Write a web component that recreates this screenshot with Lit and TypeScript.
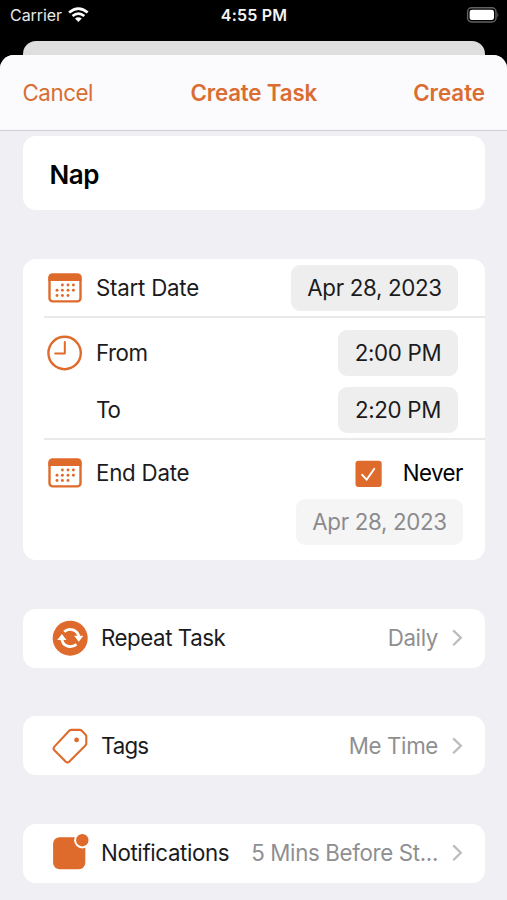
import { LitElement, html, css, svg } from "lit";
import { customElement, property } from "lit/decorators.js";

const calendarDots = [
  [14.4, 12], [20, 12], [25.4, 12],
  [9, 17.3], [14.4, 17.3], [20, 17.3], [25.4, 17.3],
  [9, 22.5], [14.4, 22.5], [20, 22.5],
];

const icons: Record<string, unknown> = {
  calendar: html`<svg width="34" height="30" viewBox="0 0 34 30">
    <rect x="1.5" y="1.8" width="31" height="26.6" rx="3.2" fill="#fff" stroke="#de6a2b" stroke-width="2.4" />
    <path d="M.4 8V4.6Q.4.6 4.2.6H29.8Q33.6.6 33.6 4.6V8Z" fill="#de6a2b" />
    ${calendarDots.map(([x, y]) => svg`<circle cx=${x} cy=${y} r="1.45" fill="#de6a2b" />`)}
  </svg>`,
  clock: html`<svg width="36" height="36" viewBox="0 0 36 36" fill="none" stroke="#de6a2b">
    <circle cx="17.6" cy="18" r="16.2" stroke-width="2.4" />
    <path d="M17.8 7V18.6H8.2" stroke-width="2" stroke-linecap="round" stroke-linejoin="round" />
  </svg>`,
  repeat: html`<svg width="36" height="36" viewBox="0 0 36 36">
    <circle cx="18.2" cy="18.2" r="17.5" fill="#de6a2b" />
    <g fill="none" stroke="#fff" stroke-width="2.8">
      <path d="M12.2 11.8A8.7 8.7 0 0 1 26.8 16.6" />
      <path d="M24.4 24.2A8.7 8.7 0 0 1 9.8 19.2" />
    </g>
    <path d="M22.1 15.8H31.4L26.8 21.8ZM5.2 20H14.5L9.9 13.9Z" fill="#fff" />
  </svg>`,
  tag: html`<svg width="36" height="36" viewBox="0 0 36 36">
    <path d="M19.4 1.9H27.6Q28.9 1.9 29.8 2.8L33.4 6.5Q34.3 7.4 34.3 8.7V15.4Q34.3 16.7 33.4 17.6L17.4 33.6Q15.5 35.3 13.6 33.5L2.4 22.2Q.7 20.4 2.4 18.6L17.2 2.8Q18.1 1.9 19.4 1.9Z" fill="none" stroke="#de6a2b" stroke-width="2.1" />
    <circle cx="24.6" cy="11.9" r="2.4" fill="#de6a2b" />
  </svg>`,
  badge: html`<svg width="36" height="36" viewBox="0 0 36 36" overflow="visible">
    <rect x="1.1" y="2.2" width="32.2" height="32" rx="6.5" fill="#de6a2b" />
    <circle cx="30.3" cy="5.2" r="8.2" fill="#fff" />
    <circle cx="30.3" cy="5.2" r="6.2" fill="#de6a2b" />
  </svg>`,
};

@customElement("status-bar")
class StatusBar extends LitElement {
  static styles = css`
    :host { display: grid; grid-template-columns: 1fr auto 1fr; align-items: center; height: 30px; padding: 0 8px 0 10px; color: #e8e8e8; font-size: 16px; }
    .left { display: flex; align-items: center; gap: 6px; letter-spacing: -.05px; }
    .time { font-weight: 600; color: #f4f4f4; letter-spacing: .2px; margin-right: 1px; }
    .battery { justify-self: end; display: block; }
    svg { display: block; }
  `;
  render() {
    return html`
      <div class="left">
        <span>Carrier</span>
        <svg width="21" height="16" viewBox="0 0 21 16" fill="none" stroke="#fff" stroke-width="2.7">
          <path d="M1.1 5.6Q10.4-2.4 19.7 5.6M4.5 9Q10.4 4.1 16.3 9" />
          <path d="M10.4 15L7 11.6Q10.4 8.8 13.8 11.6Z" fill="#fff" stroke="none" />
        </svg>
      </div>
      <div class="time">4:55 PM</div>
      <svg class="battery" width="33" height="16" viewBox="0 0 33 16">
        <rect x="1.6" y=".8" width="28.4" height="14.2" rx="4" fill="none" stroke="#626262" stroke-width="1.4" />
        <rect x="3.6" y="2.7" width="24.4" height="10.4" rx="2.4" fill="#fff" />
        <path d="M31.4 5.5Q33.2 8 31.4 10.5Z" fill="#626262" />
      </svg>`;
  }
}

@customElement("link-row")
class LinkRow extends LitElement {
  @property() icon = "";
  @property() label = "";
  @property() value = "";
  static styles = css`
    :host { display: flex; align-items: center; box-sizing: border-box; height: 59px; padding: 0 22px 0 29.5px; border-radius: 13px; background: #fff; }
    svg { display: block; flex: none; overflow: visible; }
    .label { margin-left: 13px; flex: none; letter-spacing: var(--label-spacing, 0); }
    .value { flex: 1; min-width: 0; text-align: right; color: #8f8f92; letter-spacing: -.34px; white-space: nowrap; }
    .chevron { margin-left: 13px; }
  `;
  render() {
    return html`${icons[this.icon]}
      <span class="label">${this.label}</span>
      <span class="value">${this.value}</span>
      <svg class="chevron" width="12" height="18" viewBox="0 0 12 18"><path d="M2.2 1.4L9.8 8.8L2.2 16.2" fill="none" stroke="#bcbcbf" stroke-width="2.3" /></svg>`;
  }
}

@customElement("app-root")
class AppRoot extends LitElement {
  static styles = css`
    :host { display: flex; flex-direction: column; box-sizing: border-box; height: 900px; overflow: hidden; background: #000; color: #1b1b1d; font: 400 22.3px/28px Inter, "Liberation Sans", sans-serif; }
    .behind { flex: none; height: 14px; margin: 11px 22px 0 23px; border-radius: 13px 13px 0 0; background: #dedede; }
    .sheet { flex: 1; min-height: 0; border-radius: 14px 14px 0 0; overflow: hidden; background: #f0eff4; }
    .nav { display: grid; grid-template-columns: 1fr auto 1fr; align-items: center; box-sizing: border-box; height: 76px; padding: 0 22px 0 22.5px; border-bottom: 1px solid #cfced3; background: #fbfafd; color: #d96d32; }
    .nav strong { font-weight: 600; letter-spacing: -.15px; }
    .cancel { letter-spacing: -.45px; }
    .nav .create { justify-self: end; letter-spacing: 0; }
    .form { display: flex; flex-direction: column; gap: 48.5px; padding: 5px 22px 0 22.5px; }
    .card { border-radius: 13px; background: #fff; overflow: hidden; }
    .name { display: flex; align-items: center; box-sizing: border-box; height: 74.3px; padding: 4px 27px 0; color: #000; font-size: 26px; font-weight: 600; letter-spacing: -.4px; }
    .section { margin-left: 21.5px; }
    .section + .section { border-top: 2px solid #e9e9ea; }
    .row { display: flex; align-items: center; padding-right: 27px; }
    .section.start .row { height: 57px; padding-top: 1px; box-sizing: border-box; }
    .section.start .label { padding-top: 1px; }
    .section.time { padding: 12px 0 5px; }
    .section.time .row { height: 46px; }
    .section.time .row + .row { margin-top: 11px; }
    .section.end { padding: 10px 0 15.5px; }
    .section.end .row { height: 46px; padding-right: 22px; }
    .section.end .row + .row { margin-top: 3px; }
    .icon { display: flex; justify-content: center; width: 36px; margin: 0 13.5px 0 2.5px; }
    .icon svg { display: block; }
    .label { flex: 1; letter-spacing: -.23px; }
    .label.from { letter-spacing: -.5px; }
    .label.to { letter-spacing: -1.2px; }
    .pill { display: flex; align-items: center; justify-content: center; height: 46px; border-radius: 9px; background: #eee; letter-spacing: -.33px; }
    .date { width: 167px; }
    .clock { width: 120px; }
    .muted { background: #f5f5f6; color: #8b8b8d; }
    .check { display: block; margin-right: 20.5px; }
    .never { color: #000; letter-spacing: -.5px; }
    .repeat { --label-spacing: -.45px; }
    .tags { --label-spacing: -.9px; }
    .notify { --label-spacing: -.37px; }
  `;
  render() {
    return html`
      <status-bar></status-bar>
      <div class="behind"></div>
      <div class="sheet">
        <header class="nav">
          <span class="cancel">Cancel</span>
          <strong>Create Task</strong>
          <strong class="create">Create</strong>
        </header>
        <main class="form">
          <div class="card name">Nap</div>
          <div class="card">
            <div class="section start">
              <div class="row"><span class="icon">${icons.calendar}</span><span class="label">Start Date</span><span class="pill date">Apr 28, 2023</span></div>
            </div>
            <div class="section time">
              <div class="row"><span class="icon">${icons.clock}</span><span class="label from">From</span><span class="pill clock">2:00 PM</span></div>
              <div class="row"><span class="icon"></span><span class="label to">To</span><span class="pill clock">2:20 PM</span></div>
            </div>
            <div class="section end">
              <div class="row">
                <span class="icon">${icons.calendar}</span><span class="label">End Date</span>
                <svg class="check" width="27" height="28" viewBox="0 0 27 28"><rect x=".5" y="1.8" width="26.2" height="26.2" rx="3" fill="#de6a2b" /><path d="M7.2 15.8L11.6 20.7L19.3 9.7" fill="none" stroke="#fff" stroke-width="2" stroke-linecap="round" stroke-linejoin="round" /></svg>
                <span class="never">Never</span>
              </div>
              <div class="row"><span class="label"></span><span class="pill date muted">Apr 28, 2023</span></div>
            </div>
          </div>
          <link-row class="repeat" icon="repeat" label="Repeat Task" value="Daily"></link-row>
          <link-row class="tags" icon="tag" label="Tags" value="Me Time"></link-row>
          <link-row class="notify" icon="badge" label="Notifications" value="5 Mins Before St..."></link-row>
        </main>
      </div>`;
  }
}
